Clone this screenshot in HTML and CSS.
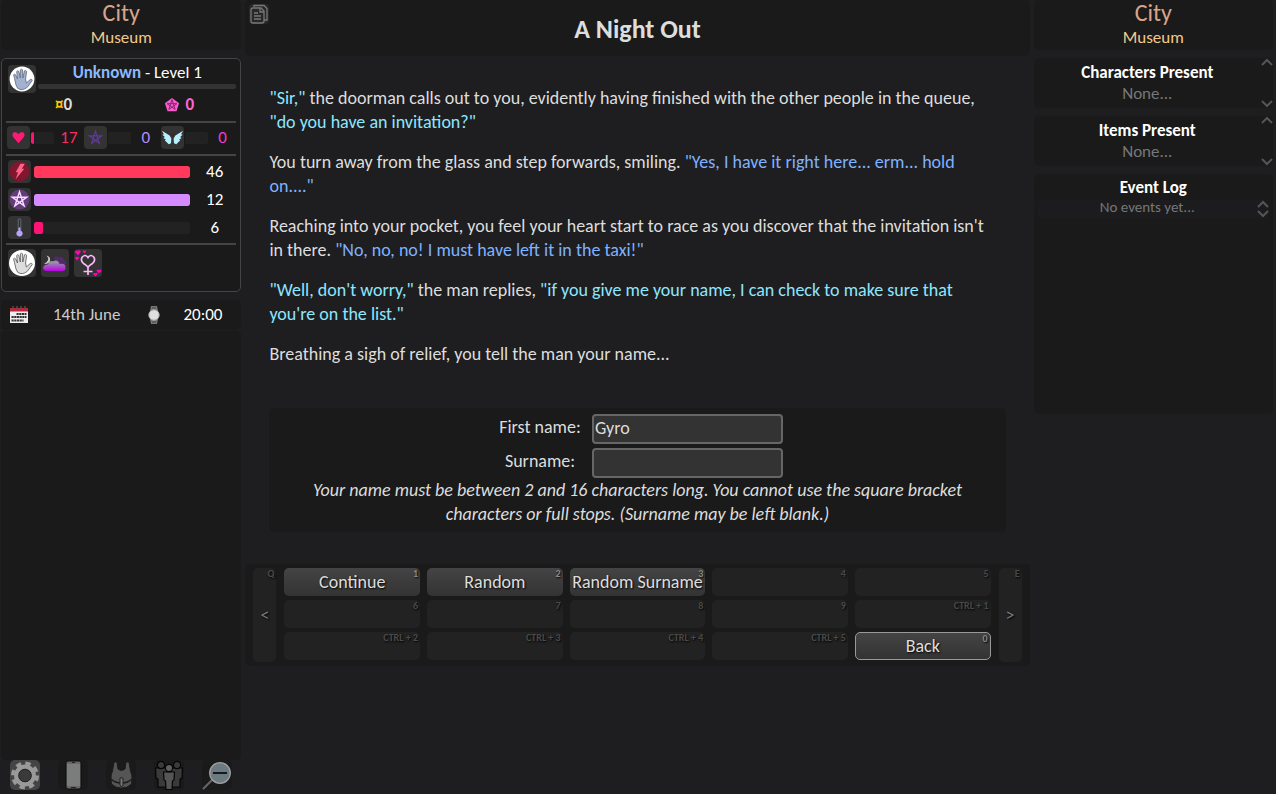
FILE: index.html
```html
<!DOCTYPE html>
<html lang="en">

<head>
    <meta charset="UTF-8">
    <meta name="viewport" content="width=device-width, initial-scale=1.0">
    <title>A Night Out</title>
    <link rel="stylesheet" href="styles.css">
</head>

<body>

    <!-- Left side: player -->
    <aside class="side side-left">
        <div class="panel place">
            <h2>City</h2>
            <p>Museum</p>
        </div>

        <div class="panel player">
            <div class="player-head">
                <span class="icon avatar">
                    <svg viewBox="0 0 28 28"><circle cx="14" cy="14" r="12.4" fill="#fff"/><path d="M8 20 L6.5 13.5 L5.6 9.8 Q6.5 8.5 7.6 9.8 L9.5 14 L8.7 6.5 Q9.6 5 10.8 6.4 L12.3 13 L12.4 4.8 Q13.5 3.5 14.6 4.9 L14.8 13 L16.5 5.8 Q17.8 4.8 18.6 6.3 L17.6 14 L18.4 18 L22.2 14.6 Q24 13.8 24.4 15.2 L19.3 22.3 Q14 26.5 9.6 23.2 Z" fill="#a3b1d0" stroke="#60697c" stroke-width=".8"/></svg>
                </span>
                <div class="player-name">
                    <p><b>Unknown</b> - Level 1</p>
                    <div class="xp"></div>
                </div>
            </div>
            <div class="money">
                <span class="coins"><i>¤</i>0</span>
                <span class="gems">
                    <svg viewBox="0 0 18 18"><path d="M9 1 L17 7 L14 16 H4 L1 7 Z" fill="#f65ccc"/><path d="M9 3 L12.5 14 L3.5 7.5 H14.5 L5.5 14 Z" fill="none" stroke="#8a2369" stroke-width="1.1"/></svg>
                    0
                </span>
            </div>
            <hr>
            <div class="stats">
                <div class="stat physique">
                    <span class="icon"><svg viewBox="0 0 24 24"><path d="M12 18 L6.4 11.5 Q4.6 8 7.5 6.6 Q10.5 5.8 12 8.7 Q13.5 5.8 16.5 6.6 Q19.4 8 17.6 11.5 Z" fill="#ff1a75"/></svg></span>
                    <span class="bar"><span class="fill" style="width: 15%"></span></span>
                    <span class="num">17</span>
                </div>
                <div class="stat arcane">
                    <span class="icon"><svg viewBox="0 0 24 24"><path d="M12 5.5 L16 18 L5.5 10.3 H18.5 L8 18 Z" fill="none" stroke="#5b3a91" stroke-width="1.3"/></svg></span>
                    <span class="bar"></span>
                    <span class="num">0</span>
                </div>
                <div class="stat corruption">
                    <span class="icon"><svg viewBox="0 0 24 24"><path d="M1 5 L6 8 L9 10 L10.8 13 L10.5 18 L8 19 L6 17 L4 15 L5 14 L2.5 12.5 L4 11.5 L1.5 9 L3 8.5 Z M23 5 L18 8 L15 10 L13.2 13 L13.5 18 L16 19 L18 17 L20 15 L19 14 L21.5 12.5 L20 11.5 L22.5 9 L21 8.5 Z" fill="#b9f0ff"/><path d="M9 7 L12 8 L15 7 L15 9 L12 11 L9 9 Z" fill="#3a2c29"/></svg></span>
                    <span class="bar"></span>
                    <span class="num">0</span>
                </div>
            </div>
            <hr>
            <div class="meters">
                <div class="meter health">
                    <span class="icon"><svg viewBox="0 0 24 24"><circle cx="12" cy="12" r="10.5" fill="#80172c"/><path d="M13 4 H17.5 L14.5 9 H17 L8 20 L10.5 12.8 H8 Z" fill="#ff638c"/></svg></span>
                    <span class="bar"><span class="fill" style="width: 100%"></span></span>
                    <span class="num">46</span>
                </div>
                <div class="meter mana">
                    <span class="icon"><svg viewBox="0 0 24 24"><circle cx="12" cy="12" r="10.5" fill="#643c7c"/><path d="M12 4 L16.8 18.7 L4.4 9.6 H19.6 L7.2 18.7 Z" fill="none" stroke="#f3dcff" stroke-width="1.5"/></svg></span>
                    <span class="bar"><span class="fill" style="width: 100%"></span></span>
                    <span class="num">12</span>
                </div>
                <div class="meter lust">
                    <span class="icon"><svg viewBox="0 0 24 24"><path d="M10 3 Q12 1.5 14 3 V15 H10 Z" fill="#53595e"/><path d="M11.5 4 H12.5 V15 H11.5 Z" fill="#292d31"/><path d="M11 12 H13 V15 A3.3 3.3 0 1 1 11 15 Z" fill="#b8a3fa"/></svg></span>
                    <span class="bar"><span class="fill" style="width: 6%"></span></span>
                    <span class="num">6</span>
                </div>
            </div>
            <hr>
            <div class="effects">
                <span class="icon"><svg viewBox="0 0 28 28"><circle cx="14" cy="14" r="13" fill="#fff"/><path d="M8 20 L6.5 13.5 L5.6 9.8 Q6.5 8.5 7.6 9.8 L9.5 14 L8.7 6.5 Q9.6 5 10.8 6.4 L12.3 13 L12.4 4.8 Q13.5 3.5 14.6 4.9 L14.8 13 L16.5 5.8 Q17.8 4.8 18.6 6.3 L17.6 14 L18.4 18 L22.2 14.6 Q24 13.8 24.4 15.2 L19.3 22.3 Q14 26.5 9.6 23.2 Z" fill="#ddd" stroke="#555" stroke-width=".8"/></svg></span>
                <span class="icon"><svg viewBox="0 0 28 28"><defs><linearGradient id="cloud" x2="0" y2="1"><stop offset=".2" stop-color="#9690a8"/><stop offset="1" stop-color="#bf00e8"/></linearGradient></defs><path d="M13 9 Q15 6 18 8 Q22 7 23 11 Q27 13 24 17 H14 Z" fill="#512b68"/><path d="M5.5 6.5 Q10 11 3 15 Q10 15 9 9 Q8 7 5.5 6.5" fill="#ccc"/><path d="M5 22 Q1 21 2.5 17.5 Q4 15 7 15.5 Q8 11 12 12.2 Q17 10 18.5 15 Q24 14 24.5 18 Q25 22 21 22 Z" fill="url(#cloud)"/></svg></span>
                <span class="icon"><svg viewBox="0 0 28 28"><path d="M14 18.5 Q13.5 17 9.5 14.5 Q6 11 8.3 8 Q11.5 4.8 14 8.5 Q16.5 4.8 19.7 8 Q22 11 18.5 14.5 Q14.5 17 14 18.5 V26 M9.5 22.5 H18.5" fill="none" stroke="#fbb9fa" stroke-width="1.7"/><path d="M4 6.5 L1 3.2 Q1 .5 3.8 1.8 Q6.5 .3 6.8 3 Z M3 11.5 L1 9 Q1.5 7 3 8 Q5 7 5.2 9 Z M10.5 4.5 L8.5 2.5 Q9 .8 10.4 1.8 Q12 .8 12.2 2.5 Z M25 24.5 L22.5 22 Q23 19.8 25 21 Q27 19.5 27.5 22 Z M21.5 27.5 L19 25.2 Q19.5 23.3 21.4 24.2 Q23.3 23.2 23.7 25 Z" fill="#f0b"/></svg></span>
            </div>
        </div>

        <div class="panel clock">
            <svg class="calendar" viewBox="0 0 20 20"><path d="M1 6 H19 V18 H1 Z" fill="#eee"/><path d="M1 3 H19 V6.5 H1 Z" fill="#c4213b"/><path d="M4 1 V4 M8 1 V4 M12 1 V4 M16 1 V4" stroke="#555" stroke-width="1.3"/><path d="M7.5 9 H17.5 M2.5 12 H17.5 M2.5 15.5 H14.5" stroke="#333" stroke-width="2.2" stroke-dasharray="2.2 .5"/></svg>
            <span class="date">14th June</span>
            <svg class="watch" viewBox="0 0 20 20"><path d="M7 1 H13 L14 6 V14 L13 19 H7 L6 14 V6 Z" fill="#777"/><path d="M8 3 H12 M8 17 H12" stroke="#444" stroke-width="1.2"/><circle cx="10" cy="10" r="5.2" fill="#e0e0e0" stroke="#aaa"/></svg>
            <span class="time">20:00</span>
        </div>

        <div class="panel spacer"></div>

        <div class="menu">
            <button class="menu-button active" aria-label="Options"><svg viewBox="0 0 30 30" fill="none"><circle cx="15" cy="15.5" r="11.5" stroke="#999" stroke-width="5" stroke-dasharray="5.03 4"/><circle cx="15" cy="15.5" r="8.7" stroke="#999" stroke-width="4.5"/><circle cx="15" cy="15.5" r="6.3" fill="#3a3a3a" stroke="#222"/></svg></button>
            <button class="menu-button" aria-label="Phone"><svg viewBox="0 0 30 30"><path d="M8 3 Q8 1 10 1 H21 Q23 1 23 3 V27 Q23 29 21 29 H10 Q8 29 8 27 Z" fill="#686868" stroke="#0c0c0c"/><path d="M9 4 H22 V26 H9 Z" fill="#7b7d7d"/><path d="M14 2.5 H17 M13 27.5 H18" stroke="#222"/></svg></button>
            <button class="menu-button" aria-label="Inventory"><svg viewBox="0 0 30 30"><path d="M8 2 H11 L12 9 Q15.5 12 19 9 L20 2 H23 L24.5 11 Q26.5 15 26 19 L25.5 24 Q21 28.5 15.5 28 Q10 28.5 5.5 24 L5 19 Q4.5 15 6.5 11 Z" fill="#555" stroke="#1b1b1b"/><path d="M5 19 Q9 23 15.5 23 Q22 23 26 19" fill="none" stroke="#1b1b1b" stroke-width="1.4"/><path d="M14 18 H17 V25 L15.5 27 L14 25 Z" fill="#777" stroke="#222"/></svg></button>
            <button class="menu-button" aria-label="Characters"><svg viewBox="0 0 30 30"><g fill="#3a3a3a" stroke="#050505" stroke-width="1.2"><path d="M1.5 8 H13 V27 H4 V19 L2 18 Z M28.5 8 H17 V27 H26 V19 L28 18 Z"/><circle cx="7" cy="5" r="3.6"/><circle cx="23" cy="5" r="3.6"/><path d="M9.5 12 H20.5 L20 20 L18.5 21 L18 29.5 H12 L11.5 21 L10 20 Z" fill="#555"/><circle cx="15" cy="8" r="3.6" fill="#606060"/></g></svg></button>
            <button class="menu-button" aria-label="Zoom out"><svg viewBox="0 0 30 30"><path d="M1 29 L10 20" stroke="#666" stroke-width="2"/><circle cx="18" cy="13" r="10.3" fill="#6c7a82" stroke="#a0a0a0" stroke-width="1.3"/><path d="M11 13 H25" stroke="#171717" stroke-width="2"/></svg></button>
        </div>
    </aside>

    <!-- Scene -->
    <main class="scene">
        <header class="panel scene-title">
            <button class="copy" aria-label="Copy text"><svg viewBox="0 0 20 20" fill="none" stroke="#777" stroke-width="1.3"><path d="M5 3 V1.5 H15 L18 4.5 V16 H15"/><path d="M12 4 H4 Q2 4 2 6 V17 Q2 19 4 19 H13 Q15 19 15 17 V7 Z M11 4.5 V8 H15 M5 9 H9 M5 12 H12 M5 15 H12"/></svg></button>
            <h1>A Night Out</h1>
        </header>

        <div class="story">
            <p><q class="doorman">"Sir,"</q> the doorman calls out to you, evidently having finished with the other people in the queue, <q class="doorman">"do you have an invitation?"</q></p>
            <p>You turn away from the glass and step forwards, smiling. <q class="you">"Yes, I have it right here... erm... hold on...."</q></p>
            <p>Reaching into your pocket, you feel your heart start to race as you discover that the invitation isn't in there. <q class="you">"No, no, no! I must have left it in the taxi!"</q></p>
            <p><q class="doorman">"Well, don't worry,"</q> the man replies, <q class="doorman">"if you give me your name, I can check to make sure that you're on the list."</q></p>
            <p>Breathing a sigh of relief, you tell the man your name...</p>
        </div>

        <form class="panel name-form">
            <div class="field">
                <label for="firstName">First name:</label>
                <input type="text" id="firstName" value="Gyro">
            </div>
            <div class="field">
                <label for="surname">Surname:</label>
                <input type="text" id="surname">
            </div>
            <p>Your name must be between 2 and 16 characters long. You cannot use the square bracket characters or full stops. (Surname may be left blank.)</p>
        </form>

        <div class="panel actions">
            <button class="action page" disabled>&lt;<kbd>Q</kbd></button>
            <div class="action-grid">
                <button class="action">Continue<kbd>1</kbd></button>
                <button class="action">Random<kbd>2</kbd></button>
                <button class="action">Random Surname<kbd>3</kbd></button>
                <button class="action" disabled><kbd>4</kbd></button>
                <button class="action" disabled><kbd>5</kbd></button>
                <button class="action" disabled><kbd>6</kbd></button>
                <button class="action" disabled><kbd>7</kbd></button>
                <button class="action" disabled><kbd>8</kbd></button>
                <button class="action" disabled><kbd>9</kbd></button>
                <button class="action" disabled><kbd>CTRL + 1</kbd></button>
                <button class="action" disabled><kbd>CTRL + 2</kbd></button>
                <button class="action" disabled><kbd>CTRL + 3</kbd></button>
                <button class="action" disabled><kbd>CTRL + 4</kbd></button>
                <button class="action" disabled><kbd>CTRL + 5</kbd></button>
                <button class="action back">Back<kbd>0</kbd></button>
            </div>
            <button class="action page" disabled>&gt;<kbd>E</kbd></button>
        </div>
    </main>

    <!-- Right side: surroundings -->
    <aside class="side side-right">
        <div class="panel place">
            <h2>City</h2>
            <p>Museum</p>
        </div>
        <div class="panel present">
            <div class="present-text">
                <h3>Characters Present</h3>
                <p>None...</p>
            </div>
            <div class="arrows">
                <button aria-label="Characters up"><svg viewBox="0 0 12 8"><path d="M1 7 L6 2 L11 7"/></svg></button>
                <button aria-label="Characters down"><svg viewBox="0 0 12 8"><path d="M1 1 L6 6 L11 1"/></svg></button>
            </div>
        </div>
        <div class="panel present">
            <div class="present-text">
                <h3>Items Present</h3>
                <p>None...</p>
            </div>
            <div class="arrows">
                <button aria-label="Items up"><svg viewBox="0 0 12 8"><path d="M1 7 L6 2 L11 7"/></svg></button>
                <button aria-label="Items down"><svg viewBox="0 0 12 8"><path d="M1 1 L6 6 L11 1"/></svg></button>
            </div>
        </div>
        <div class="panel log">
            <h3>Event Log</h3>
            <div class="log-row">
                <p>No events yet...</p>
                <div class="arrows">
                    <button aria-label="Log up"><svg viewBox="0 0 12 8"><path d="M1 7 L6 2 L11 7"/></svg></button>
                    <button aria-label="Log down"><svg viewBox="0 0 12 8"><path d="M1 1 L6 6 L11 1"/></svg></button>
                </div>
            </div>
        </div>
    </aside>

</body>

</html>
```
FILE: styles.css
```css
* {
    box-sizing: border-box;
}

body {
    display: grid;
    grid-template-columns: 19% 1fr 19%;
    gap: 3px;
    min-height: 100vh;
    margin: 0;
    background-color: #1e1e20;
    color: #ddd;
    font-family: Calibri, Carlito, Lato, sans-serif;
    font-size: 18px;
    line-height: 24px;
}

h1, h2, h3, p {
    margin: 0;
    font-weight: normal;
}

button {
    padding: 0;
    border: none;
    background: none;
    color: inherit;
    font: inherit;
}

svg {
    display: block;
    width: 100%;
    height: 100%;
}

hr {
    height: 2px;
    margin: 0;
    border: none;
    background-color: #444;
}

.panel {
    background-color: #1a1a1a;
    border-radius: 5px;
}

.side {
    display: flex;
    flex-direction: column;
    gap: 8px;
    font-size: 17px;
}

.side-left {
    padding: 0 1px 4px;
}

.side-right {
    padding-right: 3px;
}

.place {
    height: 50px;
    text-align: center;
}

.place h2 {
    color: #d9a48a;
    font-size: 24px;
    line-height: 26px;
}

.place p {
    color: #f2c98a;
}

/* Player */
.player {
    height: 234px;
    padding: 6px 4px;
    border: 1px solid #444;
}

.icon {
    flex: none;
    width: 23px;
    height: 23px;
    border-radius: 4px;
    background-color: #333;
    overflow: hidden;
}

.avatar, .effects .icon {
    width: 28px;
    height: 28px;
}

.player-head {
    display: flex;
    gap: 2px;
    padding-left: 2px;
}

.player-name {
    flex: 1;
    color: #fff;
    line-height: 16px;
    text-align: center;
}

.player-name b {
    color: #8abaff;
}

.xp {
    height: 5px;
    margin-top: 3px;
    border-radius: 2px;
    background-color: #333;
}

.money {
    display: grid;
    grid-template-columns: 1fr 1fr;
    height: 28px;
    font-weight: bold;
    justify-items: center;
}

.coins i {
    color: #ffc800;
    font-style: normal;
}

.gems {
    display: flex;
    gap: 6px;
    color: #ff66d4;
}

.gems svg {
    width: 16px;
    margin-top: 1px;
    height: 22px;
}

.stats {
    display: grid;
    grid-template-columns: repeat(3, 1fr);
    padding: 3px 0 5px;
}

.stat, .meter {
    display: flex;
    align-items: center;
    gap: 1px;
}

.stat {
    padding-left: 1px;
}

.bar {
    flex: none;
    width: 23px;
    height: 12px;
    border-radius: 2px;
    background-color: #222;
    overflow: hidden;
}

.fill {
    display: block;
    height: 100%;
    border-radius: 2px;
}

.num {
    flex: 1;
    line-height: 23px;
    text-align: center;
}

.physique .num { color: #ff2d60; }
.arcane .num { color: #b68cff; }
.corruption .num { color: #f03ad8; }
.physique .fill, .lust .fill { background-color: #ff1475; }
.health .fill { background-color: #ff385c; }
.mana .fill { background-color: #d68aff; }

.meters {
    display: flex;
    flex-direction: column;
    gap: 5px;
    padding: 4px 0 4px 2px;
}

.meter {
    gap: 3px;
    color: #fff;
}

.meter .bar {
    flex: 0 1 156px;
}

.effects {
    display: flex;
    gap: 5px;
    padding: 4px 2px;
}

.clock {
    display: flex;
    align-items: center;
    height: 30px;
    padding-left: 8px;
}

.clock svg {
    flex: none;
    width: 20px;
    height: 20px;
}

.date, .time {
    text-align: center;
}

.date {
    flex: 3;
    color: #ccc;
}

.time {
    flex: 2;
    color: #fff;
}

.spacer {
    flex: 1;
    margin: -7px 0 -8px;
}

.menu {
    display: flex;
    justify-content: space-around;
}

.menu-button {
    width: 30px;
    height: 30px;
    border-radius: 5px;
    background-color: #1a1a1a;
}

.menu-button.active {
    background-color: #444;
}

/* Scene */
.scene {
    padding-right: 1px;
}

.scene-title {
    display: flex;
    height: 56px;
    padding: 4px;
}

.scene-title h1 {
    flex: 1;
    padding-right: 20px;
    font-size: 26px;
    font-weight: bold;
    line-height: 50px;
    text-align: center;
}

.copy {
    width: 20px;
    height: 20px;
    border-radius: 4px;
    background-color: #282828;
}

.story {
    padding: 30px 38px 42px 24px;
}

.story p + p {
    margin-top: 16px;
}

q {
    quotes: none;
}

.doorman {
    color: #8ee6ff;
}

.you {
    color: #7fb2ff;
}

.name-form {
    display: flex;
    flex-direction: column;
    gap: 4px;
    margin: 0 24px 32px;
    padding: 6px 24px;
}

.field {
    display: flex;
    justify-content: center;
    gap: 4px;
}

.field label {
    width: 96px;
    line-height: 26px;
    text-align: center;
}

.field input {
    width: 191px;
    height: 30px;
    padding: 0 1px 3px;
    border: 2px solid #666;
    border-radius: 4px;
    background-color: #333;
    color: #ddd;
    font: inherit;
}

.name-form p {
    margin-top: -4px;
    font-style: italic;
    text-align: center;
}

/* Action buttons */
.actions {
    display: flex;
    gap: 8px;
    padding: 4px 8px;
}

.action-grid {
    flex: 1;
    display: grid;
    grid-template-columns: repeat(5, 1fr);
    gap: 4px 7px;
    padding-bottom: 2px;
}

.action {
    position: relative;
    height: 28px;
    border-radius: 5px;
    background: linear-gradient(#444, #333);
    text-shadow: 1px 1px 2px #000;
    white-space: nowrap;
}

.action:disabled {
    background: #222;
    color: #777;
}

.action.page {
    width: 23px;
    height: 94px;
}

.action.back {
    border: 1px solid #999;
}

.action kbd {
    position: absolute;
    top: 0;
    right: 2px;
    color: #888;
    font-family: inherit;
    font-size: 10px;
    font-weight: bold;
    line-height: 12px;
}

.action:disabled kbd {
    color: #4a4a4a;
}

/* Surroundings */
.present {
    display: flex;
    height: 50px;
    text-align: center;
}

.present-text {
    flex: 1;
    padding-top: 4px;
    line-height: 21px;
}

.side h3 {
    color: #fff;
    font-size: 17px;
    font-weight: bold;
}

.present p, .log p {
    color: #777;
}

.arrows {
    display: flex;
    flex-direction: column;
    justify-content: space-between;
}

.arrows button {
    width: 12px;
    height: 8px;
}

.arrows path {
    fill: none;
    stroke: #555;
    stroke-width: 2;
}

.log {
    height: 240px;
    padding: 2px 4px;
    text-align: center;
}

.log-row {
    display: flex;
    height: 18px;
    border-radius: 4px;
    background-color: #1c1c1e;
}

.log p {
    flex: 1;
    font-size: 15px;
    line-height: 14px;
}
```
